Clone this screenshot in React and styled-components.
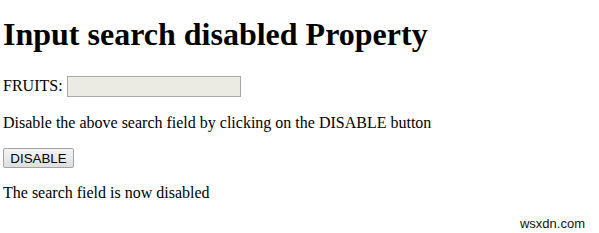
import React, { useState } from "react";
import styled, { createGlobalStyle } from "styled-components";

const Global = createGlobalStyle`
  html, body {
    margin: 0;
    background: #fff;
  }
  body {
    padding: 0 3px;
    font-family: "Liberation Serif", "Times New Roman", serif;
    font-size: 16px;
    color: #000;
  }
`;

const Page = styled.div`
  position: relative;
  height: 233px;
  overflow: hidden;
`;

const Title = styled.h1`
  font-size: 32px;
  font-weight: bold;
  margin: 16px 0 23px;
  line-height: 37px;
`;

const Para = styled.p`
  margin: 16px 0 ${(p) => p.$after || 16}px;
  line-height: normal;
`;

const SearchInput = styled.input`
  box-sizing: border-box;
  width: 174px;
  height: 21px;
  margin: 0 0 0 4px;
  padding: 1px 2px;
  border: 1px solid #a9a9a9;
  background: ${(p) => (p.disabled ? "#ebebe4" : "#fff")};
  font: 13px "Liberation Sans", Arial, sans-serif;
  vertical-align: baseline;
`;

const Button = styled.button`
  box-sizing: border-box;
  width: 71px;
  height: 20px;
  padding: 0;
  border: 1px solid #a3a3a3;
  border-radius: 2px;
  background: linear-gradient(#f4f4f4, #dedede);
  font: 13.33px "Liberation Sans", Arial, sans-serif;
  color: #000;
`;

const Watermark = styled.span`
  position: absolute;
  right: 11px;
  bottom: 2px;
  font: 13px "Liberation Sans", Arial, sans-serif;
  color: #111;
`;

export default function App() {
  const [disabled, setDisabled] = useState(true);
  return (
    <Page>
      <Global />
      <Title>Input search disabled Property</Title>
      <Para $after={17}>
        FRUITS:
        <SearchInput type="search" disabled={disabled} />
      </Para>
      <Para $after={15}>Disable the above search field by clicking on the DISABLE button</Para>
      <Para>
        <Button onClick={() => setDisabled(true)}>DISABLE</Button>
      </Para>
      <Para>{disabled ? "The search field is now disabled" : ""}</Para>
      <Watermark>wsxdn.com</Watermark>
    </Page>
  );
}
